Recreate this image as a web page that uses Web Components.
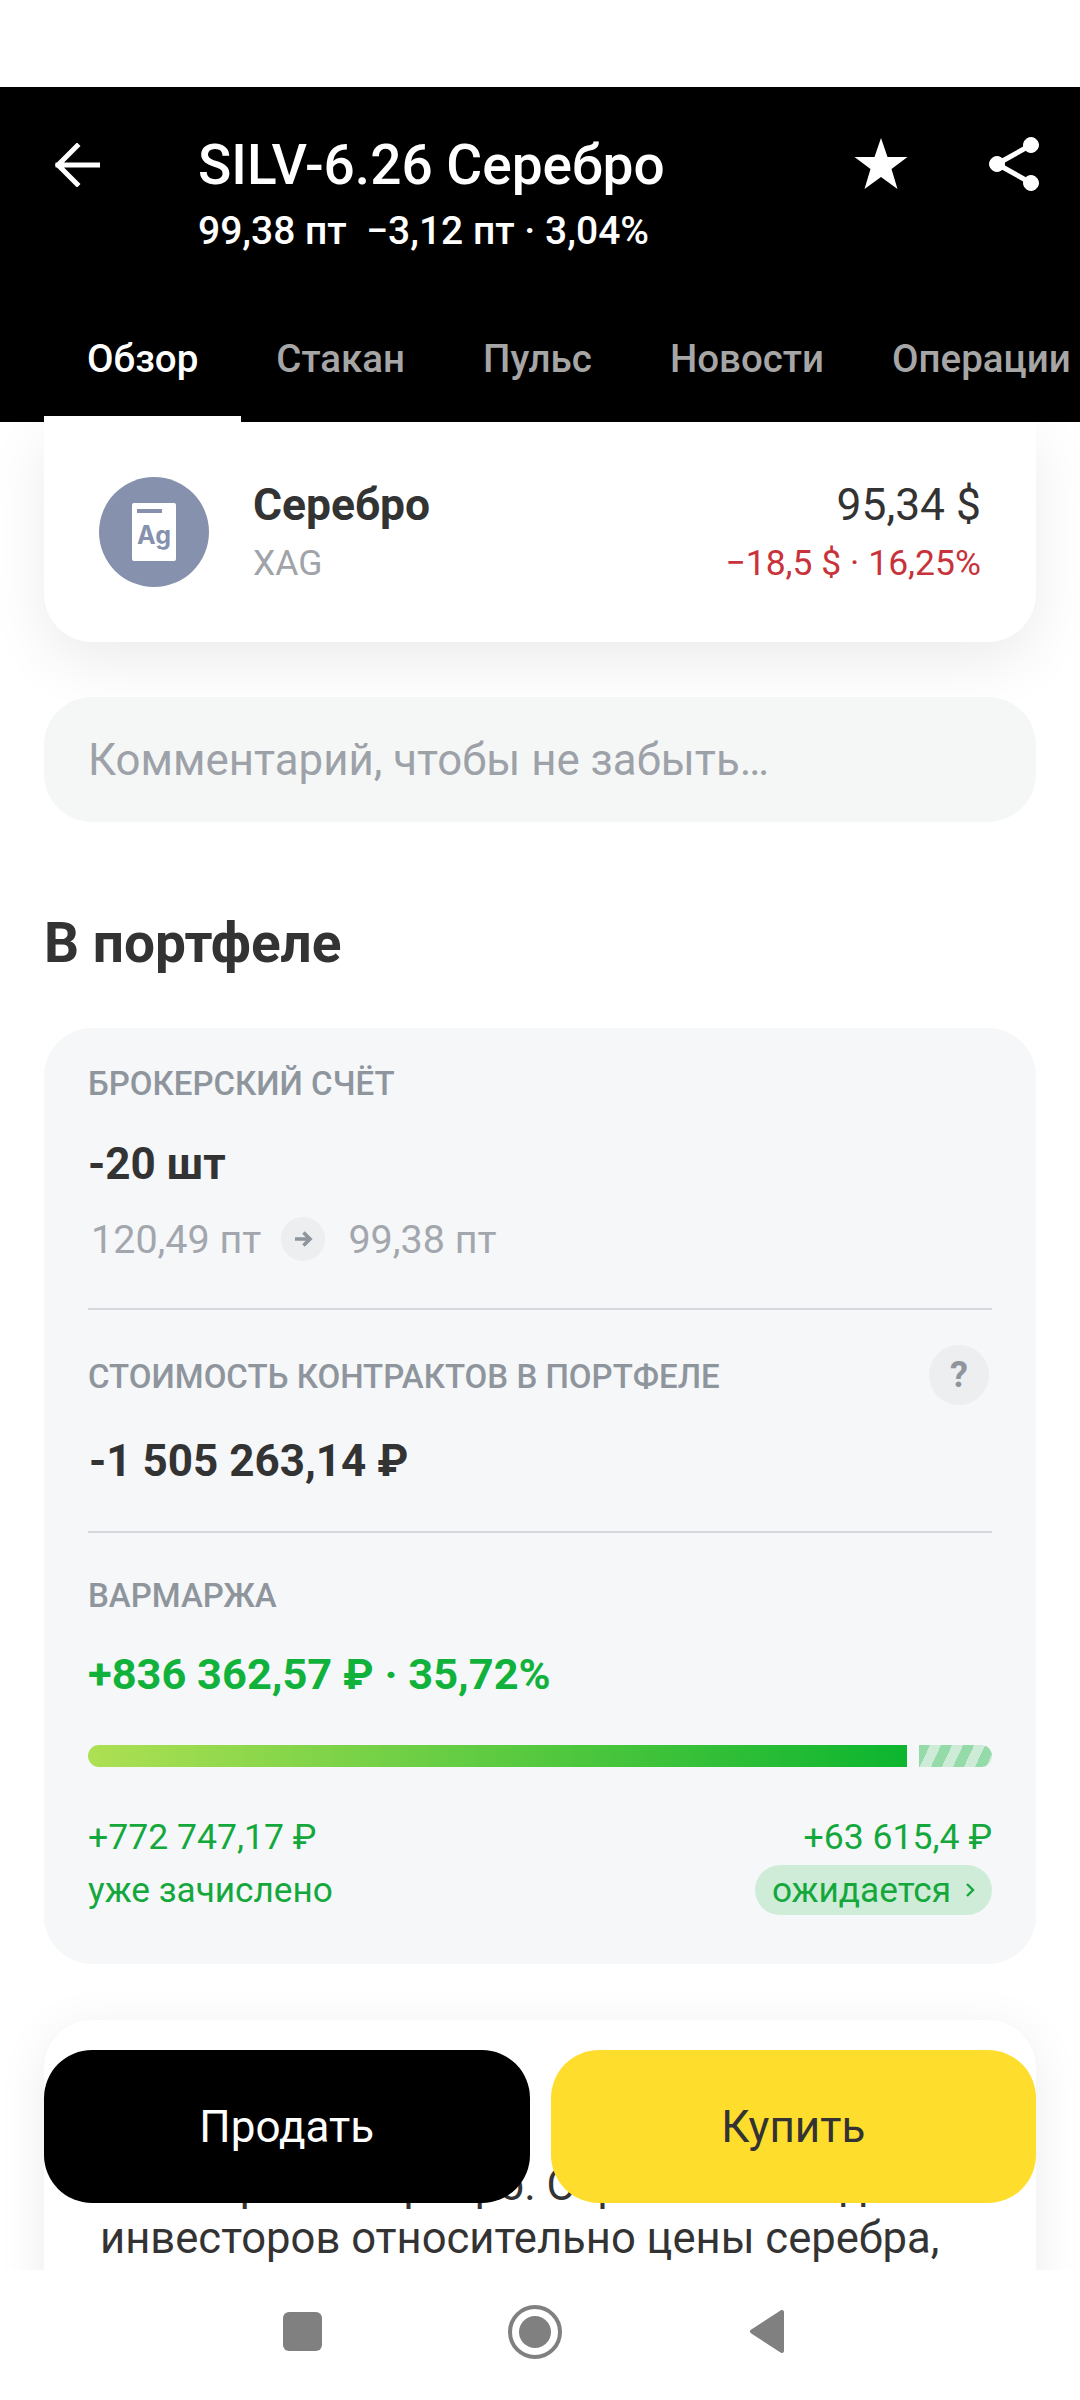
<!DOCTYPE html>
<html lang="ru">
<head>
<meta charset="utf-8">
<title>SILV-6.26</title>
<style>
  html, body { margin: 0; padding: 0; background: #fff; }
  body { width: 1080px; height: 2400px; overflow: hidden; font-family: Roboto, "Noto Sans", sans-serif; color: #333; }
</style>
</head>
<body>
<app-shell>
  <quote-header slot="header" title-text="SILV-6.26 Серебро" sub-text="99,38 пт&nbsp;&nbsp;−3,12 пт · 3,04%">
    <tab-item active>Обзор</tab-item>
    <tab-item>Стакан</tab-item>
    <tab-item>Пульс</tab-item>
    <tab-item>Новости</tab-item>
    <tab-item last>Операции</tab-item>
  </quote-header>

  <asset-card></asset-card>
  <comment-field>Комментарий, чтобы не забыть…</comment-field>
  <section-title>В портфеле</section-title>
  <portfolio-card></portfolio-card>
  <about-card>Фьючерс на серебро. Отражает ожидания инвесторов относительно цены серебра,</about-card>

  <trade-buttons slot="overlay"></trade-buttons>
  <nav-bar slot="nav"></nav-bar>
</app-shell>

<script>
class AppShell extends HTMLElement {
  connectedCallback() {
    this.attachShadow({ mode: 'open' });
    this.shadowRoot.innerHTML = `
      <style>
        :host { display: block; position: relative; width: 1080px; height: 2400px; background: #fff; }
        .wrap { display: flex; flex-direction: column; height: 100%; padding-top: 87px; box-sizing: border-box; }
        .scroll { flex: 1; min-height: 0; overflow: hidden; display: flex; flex-direction: column; }
      </style>
      <div class="wrap">
        <slot name="header"></slot>
        <div class="scroll"><slot></slot></div>
        <slot name="nav"></slot>
      </div>
      <slot name="overlay"></slot>
    `;
  }
}
customElements.define('app-shell', AppShell);

class QuoteHeader extends HTMLElement {
  connectedCallback() {
    this.attachShadow({ mode: 'open' });
    this.shadowRoot.innerHTML = `
      <style>
        :host { display: block; flex: none; height: 335px; background: #000; color: #fff; }
        .top { display: flex; height: 205px; box-sizing: border-box; padding: 46px 41px 0 55px; }
        .back { flex: none; width: 45px; height: 44px; margin-top: 10px; margin-right: 98px; }
        .info { flex: 1; min-width: 0; }
        .title { font-size: 55px; line-height: 64px; font-weight: 500; white-space: nowrap; }
        .sub { font-size: 39px; line-height: 44px; font-weight: 500; margin-top: 12px; white-space: nowrap; }
        .actions { display: flex; gap: 81px; flex: none; padding-top: 4px; }
        svg { display: block; }
        .tabs { display: flex; gap: 78px; height: 130px; padding-left: 87px; overflow: hidden; white-space: nowrap; }
      </style>
      <div class="top">
        <svg class="back" viewBox="0 0 45 44" fill="none" stroke="#fff" stroke-width="5" stroke-linecap="square">
          <path d="M3 22H43M22 3L3 22L22 41"/>
        </svg>
        <div class="info">
          <div class="title">${this.getAttribute('title-text')}</div>
          <div class="sub">${this.getAttribute('sub-text')}</div>
        </div>
        <div class="actions">
          <svg width="54" height="54" viewBox="0 0 54 54" fill="#fff">
            <path d="M27 1L33.500 20H53.500L37.500 32L43.500 52L27 40L10.500 52L16.500 32L.5 20H20.500Z"/>
          </svg>
          <svg width="50" height="54" viewBox="0 0 50 54" fill="#fff" stroke="#fff">
            <path d="M8 27L42 8M8 27L42 46" stroke-width="5" fill="none"/>
            <circle cx="42" cy="8" r="7.5"/><circle cx="8" cy="27" r="7.5"/><circle cx="42" cy="46" r="7.5"/>
          </svg>
        </div>
      </div>
      <div class="tabs"><slot></slot></div>
    `;
  }
}
customElements.define('quote-header', QuoteHeader);

class TabItem extends HTMLElement {
  connectedCallback() {
    this.attachShadow({ mode: 'open' });
    this.shadowRoot.innerHTML = `
      <style>
        :host { display: flex; align-items: center; position: relative; flex: none; padding-top: 2px; box-sizing: border-box; font-size: 38.5px; font-weight: 500; color: #a6a6a6; }
        :host([active]) { color: #fff; }
        :host([last]) { margin-left: -10px; }
        :host([active])::after { content: ''; position: absolute; left: -43px; right: -43px; bottom: 0; height: 6px; background: #fff; }
      </style>
      <slot></slot>
    `;
  }
}
customElements.define('tab-item', TabItem);

class AssetCard extends HTMLElement {
  connectedCallback() {
    this.attachShadow({ mode: 'open' });
    this.shadowRoot.innerHTML = `
      <style>
        :host { display: flex; flex: none; box-sizing: border-box; align-items: flex-start; height: 220px; margin: 0 44px; padding: 55px 55px 0; background: #fff; border-radius: 0 0 48px 48px; box-shadow: 0 20px 60px rgba(0,0,0,.08); }
        .logo { flex: none; width: 110px; height: 110px; border-radius: 50%; background: #8691ad; display: flex; align-items: center; justify-content: center; margin-right: 44px; }
        .sheet { width: 44px; height: 58px; background: #fff; border-radius: 2px; box-sizing: border-box; padding: 6px 5px 0; color: #8691ad; font: 700 25px/30px Inter, Roboto, sans-serif; text-align: center; }
        .sheet i { display: block; width: 25px; height: 4px; background: #8691ad; margin-bottom: 7px; }
        .sheet span { display: block; margin: 0 -5px; }
        .col { display: flex; flex-direction: column; }
        .right { margin-left: auto; align-items: flex-end; }
        .a { font-size: 44.4px; line-height: 56px; white-space: nowrap; }
        .b { font-size: 35.5px; line-height: 44px; margin-top: 8px; white-space: nowrap; }
        .name { font-weight: 700; }
        .ticker { color: #a0a3a8; }
        .minus { color: #c8323a; }
      </style>
      <div class="logo"><div class="sheet"><i></i><span>Ag</span></div></div>
      <div class="col">
        <div class="a name">Серебро</div>
        <div class="b ticker">XAG</div>
      </div>
      <div class="col right">
        <div class="a">95,34 $</div>
        <div class="b minus">−18,5 $ · 16,25%</div>
      </div>
    `;
  }
}
customElements.define('asset-card', AssetCard);

class CommentField extends HTMLElement {
  connectedCallback() {
    this.attachShadow({ mode: 'open' });
    this.shadowRoot.innerHTML = `
      <style>
        :host { display: flex; flex: none; align-items: center; height: 125px; margin: 55px 44px 0; padding: 0 44px; border-radius: 48px; background: #f5f7f7; color: #9da1a8; font-size: 43.8px; }
      </style>
      <slot></slot>
    `;
  }
}
customElements.define('comment-field', CommentField);

class SectionTitle extends HTMLElement {
  connectedCallback() {
    this.attachShadow({ mode: 'open' });
    this.shadowRoot.innerHTML = `
      <style>
        :host { display: block; flex: none; margin: 91px 44px 0; font-size: 55px; line-height: 60px; font-weight: 700; color: #333; }
      </style>
      <slot></slot>
    `;
  }
}
customElements.define('section-title', SectionTitle);

class PortfolioCard extends HTMLElement {
  connectedCallback() {
    this.attachShadow({ mode: 'open' });
    this.shadowRoot.innerHTML = `
      <style>
        :host { display: block; flex: none; margin: 55px 44px 0; padding: 0 44px; background: #f5f7f9; border-radius: 48px; }
        section { border-bottom: 2px solid #d5d8dc; }
        section:last-child { border-bottom: 0; }
        .s1 { padding: 36px 0 45px; }
        .s2 { padding: 35px 0 44px; }
        .s3 { padding: 43px 0 49px; }
        .label { font-size: 33px; line-height: 40px; font-weight: 500; color: #8f959c; white-space: nowrap; }
        .s2 .label { padding-top: 3px; }
        .value { font-size: 44px; line-height: 52px; font-weight: 700; white-space: nowrap; }
        .s1 .value { margin-top: 34px; }
        .s2 .value { margin-top: 30px; padding-left: 1px; }
        .s3 .value { margin-top: 33px; color: #10b23c; font-size: 43.4px; }
        .prices { display: flex; align-items: center; margin-top: 25px; height: 48px; font-size: 39.5px; color: #a3a7ad; padding-left: 3px; white-space: nowrap; }
        .go { width: 44px; height: 44px; border-radius: 50%; background: #eceef0; margin: 0 23px 0 20px; display: flex; align-items: center; justify-content: center; }
        .row { display: flex; align-items: center; justify-content: space-between; }
        .help { width: 60px; height: 60px; border-radius: 50%; background: #eceef0; color: #8f959c; font-size: 36px; font-weight: 700; display: flex; align-items: center; justify-content: center; margin-right: 3px; }
        .bar { display: flex; gap: 12px; height: 22px; margin-top: 44px; }
        .done { width: 819px; border-radius: 11px 0 0 11px; background: linear-gradient(90deg, #aee053, #0cb52f); }
        .wait { flex: 1; border-radius: 0 11px 11px 0; background: repeating-linear-gradient(115deg, #94dba9 0 10px, #cdebd7 10px 20px); }
        .sums { margin-top: 48px; height: 44px; font-size: 35.6px; color: #14a83c; white-space: nowrap; }
        .notes { margin-top: 6px; height: 50px; font-size: 35.2px; color: #14a83c; white-space: nowrap; }
        .pill { display: flex; align-items: center; gap: 14px; height: 50px; padding: 0 17px 0 17px; border-radius: 25px; background: #cfecd9; }
      </style>
      <section class="s1">
        <div class="label">БРОКЕРСКИЙ СЧЁТ</div>
        <div class="value">-20 шт</div>
        <div class="prices">
          <span>120,49 пт</span>
          <span class="go">
            <svg width="20" height="20" viewBox="0 0 20 20" fill="none" stroke="#8f959c" stroke-width="3.6"><path d="M2 10H17M10.500 3.500L17 10L10.500 16.500"/></svg>
          </span>
          <span>99,38 пт</span>
        </div>
      </section>
      <section class="s2">
        <div class="row">
          <div class="label">СТОИМОСТЬ КОНТРАКТОВ В ПОРТФЕЛЕ</div>
          <div class="help">?</div>
        </div>
        <div class="value">-1 505 263,14 ₽</div>
      </section>
      <section class="s3">
        <div class="label">ВАРМАРЖА</div>
        <div class="value">+836 362,57 ₽ · 35,72%</div>
        <div class="bar"><div class="done"></div><div class="wait"></div></div>
        <div class="row sums"><span>+772 747,17 ₽</span><span>+63 615,4 ₽</span></div>
        <div class="row notes">
          <span>уже зачислено</span>
          <span class="pill">ожидается
            <svg width="10" height="16" viewBox="0 0 10 16" fill="none" stroke="#14a83c" stroke-width="2.400"><path d="M2 2L8 8L2 14"/></svg>
          </span>
        </div>
      </section>
    `;
  }
}
customElements.define('portfolio-card', PortfolioCard);

class AboutCard extends HTMLElement {
  connectedCallback() {
    this.attachShadow({ mode: 'open' });
    this.shadowRoot.innerHTML = `
      <style>
        :host { display: block; flex: none; margin: 56px 44px 0; padding: 139px 56px 60px; background: #fff; border-radius: 48px 48px 0 0; box-shadow: 0 10px 50px rgba(0,0,0,.08); font-size: 43.6px; line-height: 53px; color: #333; }
      </style>
      <slot></slot>
    `;
  }
}
customElements.define('about-card', AboutCard);

class TradeButtons extends HTMLElement {
  connectedCallback() {
    this.attachShadow({ mode: 'open' });
    this.shadowRoot.innerHTML = `
      <style>
        :host { display: flex; gap: 21px; position: absolute; left: 44px; right: 44px; top: 2050px; height: 153px; }
        div { flex: 1; display: flex; align-items: center; justify-content: center; border-radius: 48px; font-size: 44px; }
        .sell { background: #000; color: #fff; }
        .buy { background: #ffdd2d; color: #333; }
      </style>
      <div class="sell">Продать</div>
      <div class="buy">Купить</div>
    `;
  }
}
customElements.define('trade-buttons', TradeButtons);

class NavBar extends HTMLElement {
  connectedCallback() {
    this.attachShadow({ mode: 'open' });
    this.shadowRoot.innerHTML = `
      <style>
        :host { display: flex; flex: none; position: relative; align-items: flex-start; height: 130px; background: #fff; padding: 34px 0 0 283px; box-sizing: border-box; }
        svg { display: block; flex: none; }
        .c { margin: 1px 0 0 186px; }
        .t { margin: 5px 0 0 187px; }
        .s { margin-top: 8px; }
      </style>
      <svg class="s" width="39" height="39" viewBox="0 0 39 39"><rect width="39" height="39" rx="6" fill="#808080"/></svg>
      <svg class="c" width="54" height="54" viewBox="0 0 54 54"><circle cx="27" cy="27" r="25" fill="none" stroke="#808080" stroke-width="4"/><circle cx="27" cy="27" r="16" fill="#808080"/></svg>
      <svg class="t" width="37" height="45" viewBox="0 0 37 45"><path d="M33 3L3 22.500L33 42Z" fill="#808080" stroke="#808080" stroke-width="4" stroke-linejoin="round"/></svg>
    `;
  }
}
customElements.define('nav-bar', NavBar);
</script>
</body>
</html>
